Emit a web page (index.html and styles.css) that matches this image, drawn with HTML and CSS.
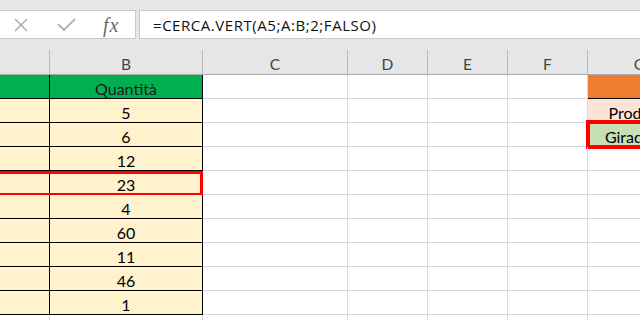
FILE: index.html
```html
<!DOCTYPE html>
<html lang="it">
<head>
  <meta charset="UTF-8" />
  <meta name="viewport" content="width=device-width, initial-scale=1.0" />
  <title>CERCA.VERT</title>
  <link rel="stylesheet" href="styles.css">
</head>
<body>
  <div class="toolbar">
    <div class="fx-buttons">
      <svg class="ico-x" width="14" height="14" viewBox="0 0 14 14"><path d="M1 1 L13 13 M13 1 L1 13" /></svg>
      <svg class="ico-ok" width="19" height="13" viewBox="0 0 19 13"><path d="M1 6 L7 12 L18 1" /></svg>
      <span class="fx">fx</span>
    </div>
    <div class="formula">=CERCA.VERT(A5;A:B;2;FALSO)</div>
  </div>

  <div class="sheet">
    <div class="row heads">
      <div class="cell"></div>
      <div class="cell">B</div>
      <div class="cell">C</div>
      <div class="cell">D</div>
      <div class="cell">E</div>
      <div class="cell">F</div>
      <div class="cell">G</div>
    </div>
    <div class="row">
      <div class="cell green"></div>
      <div class="cell green">Quantità</div>
      <div class="cell"></div><div class="cell"></div><div class="cell"></div><div class="cell"></div>
      <div class="cell orange"></div>
    </div>
    <div class="row">
      <div class="cell yellow"></div>
      <div class="cell yellow">5</div>
      <div class="cell"></div><div class="cell"></div><div class="cell"></div><div class="cell"></div>
      <div class="cell peach">Prodotto</div>
    </div>
    <div class="row">
      <div class="cell yellow"></div>
      <div class="cell yellow">6</div>
      <div class="cell"></div><div class="cell"></div><div class="cell"></div><div class="cell"></div>
      <div class="cell lime">Giradischi<div class="mark mark-g"></div></div>
    </div>
    <div class="row">
      <div class="cell yellow"></div>
      <div class="cell yellow">12</div>
      <div class="cell"></div><div class="cell"></div><div class="cell"></div><div class="cell"></div><div class="cell"></div>
    </div>
    <div class="row">
      <div class="cell yellow"></div>
      <div class="cell yellow">23</div>
      <div class="cell"></div><div class="cell"></div><div class="cell"></div><div class="cell"></div><div class="cell"></div>
      <div class="mark mark-row"></div>
    </div>
    <div class="row">
      <div class="cell yellow"></div>
      <div class="cell yellow">4</div>
      <div class="cell"></div><div class="cell"></div><div class="cell"></div><div class="cell"></div><div class="cell"></div>
    </div>
    <div class="row">
      <div class="cell yellow"></div>
      <div class="cell yellow">60</div>
      <div class="cell"></div><div class="cell"></div><div class="cell"></div><div class="cell"></div><div class="cell"></div>
    </div>
    <div class="row">
      <div class="cell yellow"></div>
      <div class="cell yellow">11</div>
      <div class="cell"></div><div class="cell"></div><div class="cell"></div><div class="cell"></div><div class="cell"></div>
    </div>
    <div class="row">
      <div class="cell yellow"></div>
      <div class="cell yellow">46</div>
      <div class="cell"></div><div class="cell"></div><div class="cell"></div><div class="cell"></div><div class="cell"></div>
    </div>
    <div class="row">
      <div class="cell yellow"></div>
      <div class="cell yellow">1</div>
      <div class="cell"></div><div class="cell"></div><div class="cell"></div><div class="cell"></div><div class="cell"></div>
    </div>
    <div class="row">
      <div class="cell"></div><div class="cell"></div><div class="cell"></div><div class="cell"></div>
      <div class="cell"></div><div class="cell"></div><div class="cell"></div>
    </div>
  </div>
</body>
</html>
```

FILE: styles.css
```css
:root {
  --chrome: #e6e6e6;
  --grid: #d9d9d9;
  --head-line: #b8b8b8;
  --ink: #000000;
  --mark: #ff0000;
}
* { box-sizing: border-box; margin: 0; padding: 0; }
html, body { width: 640px; height: 320px; overflow: hidden; background: #fff; }
body { font-family: 'Lato', 'Liberation Sans', sans-serif; color: var(--ink); }

/* formula bar */
.toolbar { display: flex; gap: 3px; padding: 10px 0 11px; background: var(--chrome); }
.fx-buttons { width: 136px; height: 29px; flex: none; display: flex; align-items: center; background: #fff; border: 1px solid #c8c8c8; border-left: none; }
.ico-x { margin-left: 14px; }
.ico-x path { stroke: #a8a8a8; stroke-width: 1.4; fill: none; }
.ico-ok { margin-left: 29px; }
.ico-ok path { stroke: #b4b4b4; stroke-width: 2; fill: none; }
.fx { margin-left: 27px; font-family: 'Liberation Serif', serif; font-style: italic; font-size: 20px; color: #6a6a6a; line-height: 20px; letter-spacing: 1px; }
.formula { flex: 1; height: 29px; background: #fff; border: 1px solid #c8c8c8; border-right: none; padding: 2px 0 0 13px; font-family: 'Open Sans', sans-serif; font-size: 15px; letter-spacing: 0.55px; line-height: 25px; color: #111; white-space: nowrap; }

/* sheet grid */
.sheet { width: 640px; overflow: hidden; }
.row { position: relative; display: grid; grid-template-columns: 50px 153px 145px 80px 80px 80px 104px; height: 24px; width: 692px; }
.cell { position: relative; height: 24px; border-right: 1px solid var(--grid); border-bottom: 1px solid var(--grid); text-align: center; font-size: 16px; line-height: 21px; padding-top: 3px; white-space: nowrap; }
.heads { height: 25px; background: var(--chrome); }
.heads .cell { height: 25px; border-right-color: var(--head-line); border-bottom-color: #ababab; font-size: 15.5px; line-height: 22px; color: #444; }

.green { background: #00b050; color: #1b1b1b; }
.yellow { background: #fff2cc; }
.green, .yellow { border-right-color: #000; border-bottom-color: #000; }
.orange { background: #ed7d31; border-bottom-color: #000; }
.peach { background: #fce4d6; border-bottom-color: #000; }
.lime { background: #c6e0b4; }

/* red highlight frames */
.mark { position: absolute; border: 3px solid var(--mark); pointer-events: none; }
.mark-row { left: -10px; top: 0; width: 213px; height: 25px; }
.mark-g { left: -2px; top: -3px; width: 140px; height: 29px; border-width: 4px; }
```
